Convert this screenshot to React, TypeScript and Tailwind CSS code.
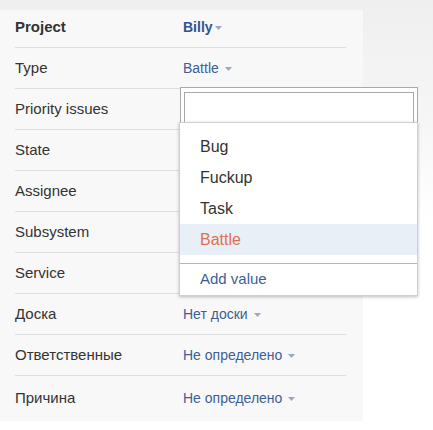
import React from "react";

const Caret = ({ className = "" }: { className?: string }) => (
  <svg width="7" height="4" viewBox="0 0 7 4" className={className}>
    <path d="M0 0 L7 0 L3.5 4 Z" fill="#98a9c4" />
  </svg>
);

const rows: { label: string; value?: string; bold?: boolean; gap?: boolean }[] = [
  { label: "Project", value: "Billy", bold: true },
  { label: "Type", value: "Battle" },
  { label: "Priority issues" },
  { label: "State" },
  { label: "Assignee" },
  { label: "Subsystem" },
  { label: "Service" },
  { label: "Доска", value: "Нет доски" },
  { label: "Ответственные", value: "Не определено" },
  { label: "Причина", value: "Не определено" },
];

export default function App() {
  return (
    <div
      className="relative w-[433px] h-[430px] overflow-hidden bg-[linear-gradient(to_bottom,#efefef_0px,#f6f6f6_120px,#ffffff_220px)]"
      style={{ fontFamily: '"Liberation Sans", Arial, sans-serif' }}
    >
      <div className="mt-[10px] w-[363px] h-[411px] bg-[#f8f8f8] pl-[15px] pr-[17px]">
        {rows.map((r, i) => {
          const last = i === rows.length - 1;
          const h = i === 0 ? "h-[38px]" : last ? "h-[44px]" : "h-[41px]";
          return (
            <div
              key={i}
              className={`flex items-center ${h} ${last ? "" : "border-b border-[#dedede]"} ${i === 0 ? "pb-[3px]" : ""}`}
            >
              <div
                className={`w-[168px] text-[15px] text-[#333333] ${r.bold ? "font-bold" : ""}`}
              >
                {r.label}
              </div>
              {r.value && (
                <div
                  className={`flex items-center text-[14px] ${r.bold ? "font-bold text-[#2d5592] gap-[2px]" : "text-[#3d5f95] gap-[6px]"}`}
                >
                  <span>{r.value}</span>
                  <Caret className="mt-[1px]" />
                </div>
              )}
            </div>
          );
        })}
      </div>

      {/* popup */}
      <div className="absolute left-[180px] top-[87px] w-[238px] h-[209px] border border-[#a9a9a9] bg-white pt-[4px] px-[3px]">
        <div className="h-[40px] border border-[#a9a9a9] bg-white" />
      </div>
      <div
        className="absolute left-[179px] top-[122px] w-[239px] h-[174px] border border-[#cfcfcf] bg-white shadow-[0_1px_3px_rgba(0,0,0,0.25)] text-[16px]"
      >
        <div className="pt-[8px]">
          <div className="h-[31px] flex items-center pl-[20px] text-[#333333]">Bug</div>
          <div className="h-[31px] flex items-center pl-[20px] text-[#333333]">Fuckup</div>
          <div className="h-[31px] flex items-center pl-[20px] text-[#333333]">Task</div>
          <div className="h-[31px] flex items-center pl-[20px] text-[#e0704f] bg-[#e9eff7]">Battle</div>
        </div>
        <div className="mt-[8px] border-t border-[#b5b5b5] h-[32px] flex items-center pl-[20px] text-[15px] text-[#3d5f95]">
          Add value
        </div>
      </div>
    </div>
  );
}
